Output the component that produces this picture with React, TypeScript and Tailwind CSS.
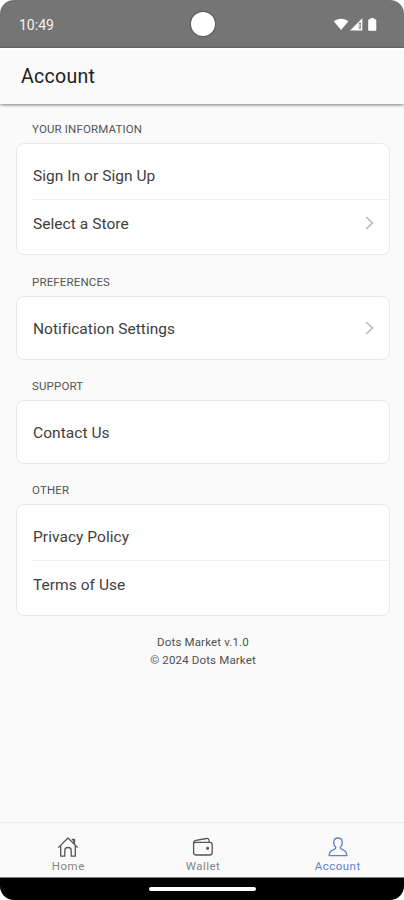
import type { ReactNode } from "react";

interface Row {
  label: string;
  chevron?: boolean;
}

interface Section {
  title: string;
  rows: Row[];
}

const sections: Section[] = [
  { title: "YOUR INFORMATION", rows: [{ label: "Sign In or Sign Up" }, { label: "Select a Store", chevron: true }] },
  { title: "PREFERENCES", rows: [{ label: "Notification Settings", chevron: true }] },
  { title: "SUPPORT", rows: [{ label: "Contact Us" }] },
  { title: "OTHER", rows: [{ label: "Privacy Policy" }, { label: "Terms of Use" }] },
];

const tabs: { label: string; icon: ReactNode; active?: boolean }[] = [
  {
    label: "Home",
    icon: (
      <>
        <path d="M1.3 11.6L11 2L20.7 11.6" />
        <path d="M3.7 9.4V20.2H7.8V14.5Q7.8 11.5 11 11.5Q14.2 11.5 14.2 14.5V20.2H18.3V9.4" />
        <path d="M14.8 3.6H17.2V8" strokeWidth="1.8" />
      </>
    ),
  },
  {
    label: "Wallet",
    icon: (
      <>
        <path d="M3.6 6.3H17.6Q20.2 6.3 20.2 8.9V16.4Q20.2 19 17.6 19H4.2Q1.6 19 1.6 16.4V7.2Q1.6 5 3.9 4.4L14.5 2.5Q16.6 2.2 17 4.2L17.5 6.3" />
        <path d="M2 7.2Q2.6 6.3 4 6.3" />
        <circle cx="15.6" cy="12.2" r="0.9" fill="currentColor" />
      </>
    ),
  },
  {
    label: "Account",
    active: true,
    icon: (
      <path d="M8.9 11.2C5.7 8.9 5.7 2 11 2S16.3 8.9 13.1 11.2C13.1 13 14.4 13.2 16 13.8C18.6 14.8 19.8 16.6 19.9 19.6H2.1C2.2 16.6 3.4 14.8 6 13.8C7.6 13.2 8.9 13 8.9 11.2Z" />
    ),
  },
];

function StatusBar() {
  return (
    <div className="relative h-12 shrink-0 bg-[#757575] flex items-center justify-between pl-[19px] pr-[26px] border-b border-[#6c6c6c]">
      <span className="text-[14px] text-[#f2f2f2] pt-[3px]">10:49</span>
      <div className="absolute left-[191px] top-3 size-6 rounded-full bg-white shadow-[0_0_1px_1px_rgba(0,0,0,0.25)]" />
      <svg width="45" height="15" viewBox="0 0 45 15" className="mt-px" fill="white">
        <path d="M0.8 4.2C4.9 0.8 11.3 0.8 15.4 4.2L8.1 13Z" />
        <path d="M17 13.5L29.3 1.2V13.5Z" />
        <path d="M25.8 5.8H28V11.8H25.8Z" fill="#757575" />
        <path d="M26.9 6.8V10.8" stroke="white" strokeWidth="0.9" />
        <path d="M37.5 1H41V2.3H42.3Q43.3 2.3 43.3 3.3V12.8Q43.3 13.8 42.3 13.8H36.2Q35.2 13.8 35.2 12.8V3.3Q35.2 2.3 36.2 2.3H37.5Z" />
      </svg>
    </div>
  );
}

function SectionCard({ section }: { section: Section }) {
  return (
    <section className="first:-mt-px first:mb-px">
      <h2 className="h-10 pt-[18px] pl-4 text-[11.5px] leading-4 tracking-[0.15px] text-[#555555]">{section.title}</h2>
      <div className="rounded-lg border border-[#e8e8e8] bg-white py-[7px] pl-4">
        {section.rows.map((row, i) => (
          <div
            key={row.label}
            className={`flex h-12 items-center justify-between border-t pr-[15px] text-[15.5px] leading-6 tracking-[0.05px] text-[#404040] ${
              i > 0 ? "border-[#eeeeee]" : "border-transparent"
            }`}
          >
            <span>{row.label}</span>
            {row.chevron && (
              <svg width="9" height="14" viewBox="0 0 9 14" fill="none" stroke="#bcbcbc" strokeWidth="1.7" className="mb-px">
                <path d="M1.2 1L7.3 7L1.2 13" />
              </svg>
            )}
          </div>
        ))}
      </div>
    </section>
  );
}

export default function App() {
  return (
    <div className="h-screen bg-white">
      <div className="flex h-full flex-col overflow-hidden rounded-[14px] bg-[#fafafa] font-[Roboto,sans-serif]">
        <StatusBar />
        <header className="relative flex h-14 shrink-0 items-center border-t-2 border-white bg-[#fafafa] pl-[21px] shadow-[0_1px_3px_rgba(0,0,0,0.5)]">
          <h1 className="text-[19.5px] tracking-[0.3px] text-[#202020]">Account</h1>
        </header>

        <main className="flex-1 pl-4 pr-[14px]">
          {sections.map((section) => (
            <SectionCard key={section.title} section={section} />
          ))}
          <p className="pt-[17px] text-center text-[11.5px] leading-[18px] tracking-[0.15px] text-[#505050]">
            Dots Market v.1.0
            <br />© 2024 Dots Market
          </p>
        </main>

        <nav className="grid h-[55px] shrink-0 grid-cols-3 border-t border-[#ececec]">
          {tabs.map(({ label, icon, active }) => (
            <div
              key={label}
              className={`flex flex-col items-center pt-[13px] pl-0.5 ${active ? "text-[#6380c4]" : "text-[#555555]"}`}
            >
              <svg width="22" height="22" viewBox="0 0 22 22" fill="none" stroke="currentColor" strokeWidth="1.3" strokeLinejoin="round">
                {icon}
              </svg>
              <span className={`mt-px text-[11.5px] leading-[15px] tracking-[0.5px] ${active ? "" : "text-[#858585]"}`}>
                {label}
              </span>
            </div>
          ))}
        </nav>
        <div className="flex h-[23px] shrink-0 justify-center border-t border-[#777777] bg-black pt-[9px]">
          <div className="h-1 w-[107px] rounded-full bg-white" />
        </div>
      </div>
    </div>
  );
}
